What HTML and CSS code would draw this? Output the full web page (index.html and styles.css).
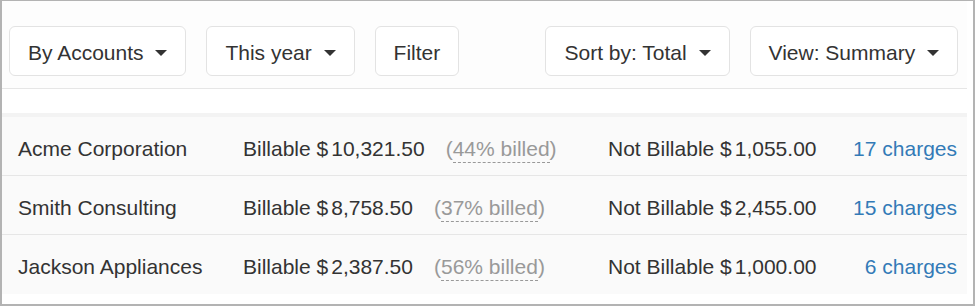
FILE: index.html
```html
<!DOCTYPE html>
<html lang="en">
<head>
  <meta charset="UTF-8" />
  <title>Charges by account</title>
  <link rel="stylesheet" href="styles.css">
</head>
<body>
  <div class="frame">
    <div class="panel">
      <div class="toolbar">
        <div class="btn-group">
          <button class="btn">By Accounts <span class="caret"></span></button>
          <button class="btn">This year <span class="caret"></span></button>
          <button class="btn">Filter</button>
        </div>
        <div class="btn-group">
          <button class="btn">Sort by: Total <span class="caret"></span></button>
          <button class="btn">View: Summary <span class="caret"></span></button>
        </div>
      </div>

      <div class="accounts">
        <div class="account-row">
          <div class="name">Acme Corporation</div>
          <div class="billable">Billable <span class="cur">$</span>10,321.50<span class="billed">(<abbr title="Billed so far">44% billed</abbr>)</span></div>
          <div class="not-billable">Not Billable <span class="cur">$</span>1,055.00</div>
          <a class="charges" href="#">17 charges</a>
        </div>
        <div class="account-row">
          <div class="name">Smith Consulting</div>
          <div class="billable">Billable <span class="cur">$</span>8,758.50<span class="billed">(<abbr title="Billed so far">37% billed</abbr>)</span></div>
          <div class="not-billable">Not Billable <span class="cur">$</span>2,455.00</div>
          <a class="charges" href="#">15 charges</a>
        </div>
        <div class="account-row">
          <div class="name">Jackson Appliances</div>
          <div class="billable">Billable <span class="cur">$</span>2,387.50<span class="billed">(<abbr title="Billed so far">56% billed</abbr>)</span></div>
          <div class="not-billable">Not Billable <span class="cur">$</span>1,000.00</div>
          <a class="charges" href="#">6 charges</a>
        </div>
      </div>
    </div>
  </div>
</body>
</html>
```

FILE: styles.css
```css
body {
  margin: 0;
  font-family: "Liberation Sans", Arial, sans-serif;
  font-size: 21px;
  color: #333;
  background: #fff;
}
.frame {
  width: 975px;
  height: 306px;
  box-sizing: border-box;
  border: 2px solid #b3b3b3;
  border-top-width: 1px;
  padding-right: 5px;
  background: #fff;
}
.panel {
  width: 965px;
}
.toolbar {
  display: flex;
  justify-content: space-between;
  padding: 25px 9px 12px 7px;
  border-bottom: 1px solid #e6e6e6;
  background: #fdfdfd;
}
.btn-group {
  display: flex;
  gap: 20px;
}
.btn {
  display: flex;
  align-items: center;
  height: 50px;
  box-sizing: border-box;
  padding: 3px 18px 0 18px;
  font-family: inherit;
  font-size: 21px;
  color: #333;
  background: #fff;
  border: 1px solid #e3e3e3;
  border-radius: 6px;
  cursor: pointer;
  white-space: pre;
}
.caret {
  display: inline-block;
  width: 0;
  height: 0;
  margin-left: 6px;
  border-top: 6px solid #333;
  border-left: 6px solid transparent;
  border-right: 6px solid transparent;
}
.accounts {
  margin-top: 24px;
  border-top: 4px solid #f3f3f3;
  background: #fafafa;
}
.account-row {
  display: grid;
  grid-template-columns: 225px 365px auto 1fr;
  align-items: center;
  height: 59px;
  padding: 5px 10px 0 16px;
  box-sizing: border-box;
  border-bottom: 1px solid #e6e6e6;
  white-space: nowrap;
}
.account-row:last-child {
  border-bottom: none;
}
.cur {
  margin-right: 3px;
}
.billed {
  margin-left: 21px;
  color: #999;
}
.billed abbr {
  text-decoration: none;
  border-bottom: 1px dashed #999;
  padding-bottom: 2px;
}
.charges {
  justify-self: end;
  color: #337ab7;
  text-decoration: none;
}
```
